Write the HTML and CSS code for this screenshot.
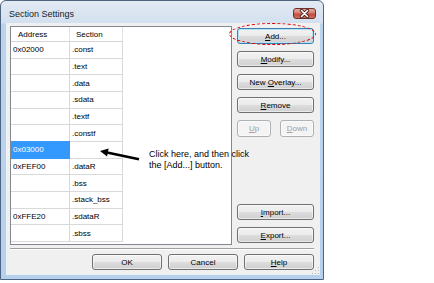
FILE: index.html
```html
<!doctype html>
<html lang="en">
  <head>
    <meta charset="UTF-8" />
    <title>Section Settings</title>
    <link rel="stylesheet" href="styles.css">
  </head>
  <body>
    <div class="window">
      <div class="titlebar">
        <span class="title">Section Settings</span>
        <span class="close">
          <svg width="21" height="9" viewBox="0 0 21 9">
            <path d="M7.5 1.5 L13.5 7.5 M13.5 1.5 L7.5 7.5" stroke="#4a2320" stroke-width="3.2" stroke-linecap="round" />
            <path d="M7.5 1.5 L13.5 7.5 M13.5 1.5 L7.5 7.5" stroke="#fff" stroke-width="1.6" stroke-linecap="round" />
          </svg>
        </span>
      </div>
      <div class="client">
        <div class="main">
          <div class="list">
            <div class="row head">
              <div class="cell addr">Address</div>
              <div class="cell sec">Section</div>
            </div>
            <div class="row"><div class="cell addr">0x02000</div><div class="cell sec">.const</div></div>
            <div class="row"><div class="cell addr"></div><div class="cell sec">.text</div></div>
            <div class="row"><div class="cell addr"></div><div class="cell sec">.data</div></div>
            <div class="row"><div class="cell addr"></div><div class="cell sec">.sdata</div></div>
            <div class="row"><div class="cell addr"></div><div class="cell sec">.textf</div></div>
            <div class="row"><div class="cell addr"></div><div class="cell sec">.constf</div></div>
            <div class="row"><div class="cell addr selected">0x03000</div><div class="cell sec"></div></div>
            <div class="row"><div class="cell addr">0xFEF00</div><div class="cell sec">.dataR</div></div>
            <div class="row"><div class="cell addr"></div><div class="cell sec">.bss</div></div>
            <div class="row"><div class="cell addr"></div><div class="cell sec">.stack_bss</div></div>
            <div class="row"><div class="cell addr">0xFFE20</div><div class="cell sec">.sdataR</div></div>
            <div class="row"><div class="cell addr"></div><div class="cell sec">.sbss</div></div>
          </div>
          <div class="side">
            <button class="btn default"><u>A</u>dd...</button>
            <button class="btn"><u>M</u>odify...</button>
            <button class="btn">New <u>O</u>verlay...</button>
            <button class="btn"><u>R</u>emove</button>
            <div class="pair">
              <button class="btn disabled"><u>U</u>p</button>
              <button class="btn disabled"><u>D</u>own</button>
            </div>
            <div class="spacer"></div>
            <button class="btn"><u>I</u>mport...</button>
            <button class="btn"><u>E</u>xport...</button>
          </div>
        </div>
        <div class="sep"></div>
        <div class="footer">
          <button class="btn wide">OK</button>
          <button class="btn wide">Cancel</button>
          <button class="btn wide"><u>H</u>elp</button>
        </div>
        <div class="grip"></div>
      </div>

      <!-- annotation drawn over the dialog -->
      <div class="ring"></div>
      <svg class="arrow" width="46" height="18" viewBox="0 0 46 18">
        <path d="M9 6.6 L41 13.2" stroke="#000" stroke-width="2.6" />
        <path d="M2 5 L10.6 2.6 L9.1 10.4 Z" fill="#000" />
      </svg>
      <div class="callout">Click here, and then click<br />the [Add...] button.</div>
    </div>
  </body>
</html>
```

FILE: styles.css
```css
html,
body {
  margin: 0;
  padding: 0;
  background: #fff;
}
body {
  font-family: "Liberation Sans", Arial, sans-serif;
  font-size: 8px;
  color: #000;
}
.window {
  position: relative;
  box-sizing: border-box;
  width: 324px;
  height: 280px;
  border: 1px solid #4d6380;
  border-radius: 6px 6px 0 0;
  background: linear-gradient(180deg, #e2eaf4 0px, #d3e0ef 22px, #bcd3ec 23px, #b6d1ee 100%);
  display: flex;
  flex-direction: column;
}
.titlebar {
  height: 22px;
  display: flex;
  align-items: flex-start;
  justify-content: space-between;
  padding: 0 7px 0 8px;
}
.title {
  font-size: 9px;
  color: #1b1b1b;
  margin-top: 8px;
}
.close {
  margin-top: 7px;
  width: 21px;
  height: 9px;
  border: 1px solid #6f2f2a;
  border-radius: 3px;
  background: linear-gradient(180deg, #e8aaa0 0%, #d37b6f 45%, #c24a3c 55%, #cf6f5a 100%);
  display: flex;
}
.client {
  position: relative;
  margin: 0 3px 4px 5px;
  height: 252px;
  box-sizing: border-box;
  background: #f0f0f0;
  padding: 3px 6px 5px 4px;
  display: flex;
  flex-direction: column;
}
.main {
  display: flex;
  height: 219px;
}
.list {
  box-sizing: border-box;
  width: 222px;
  height: 219px;
  border: 1px solid #828790;
  background: #fff;
}
.row {
  display: flex;
  height: 16.67px;
  box-sizing: border-box;
  width: 112px;
  border-bottom: 1px solid #d9d9d9;
}
.row.head {
  height: 15px;
  border-bottom: 1px solid #d5d5d5;
}
.cell {
  box-sizing: border-box;
  border-right: 1px solid #d9d9d9;
  padding-left: 2px;
  display: flex;
  align-items: center;
  white-space: nowrap;
}
.addr {
  width: 59px;
}
.sec {
  width: 53px;
}
.head .cell {
  border-right-color: #e3e3e3;
  padding-left: 6px;
}
.head .addr {
  padding-left: 7px;
}
.selected {
  background: #3399ff;
  color: #fff;
  margin-top: -1px;
  margin-bottom: -1px;
  border-right: none;
}
.side {
  width: 77px;
  margin-left: 5px;
  padding: 2px 0;
  box-sizing: border-box;
  display: flex;
  flex-direction: column;
  gap: 7px;
}
.spacer {
  flex: 1;
}
.pair {
  display: flex;
  justify-content: space-between;
}
.pair .btn {
  width: 34px;
  height: 17px;
}
.btn {
  box-sizing: border-box;
  height: 16px;
  padding: 0;
  font-family: inherit;
  font-size: 8px;
  color: #000;
  border: 1px solid #707070;
  border-radius: 3px;
  background: linear-gradient(180deg, #f2f2f2 0%, #ebebeb 50%, #dddddd 51%, #cfcfcf 100%);
  box-shadow: inset 0 0 0 1px rgba(255, 255, 255, 0.55);
}
.btn.default {
  border-color: #3c7fb1;
  box-shadow: inset 0 0 0 1px #b4e3f8;
  background: linear-gradient(180deg, #f2f2f2 0%, #ebebeb 50%, #dcdcdc 51%, #d2d2d2 100%);
}
.btn.disabled {
  color: #a0a0a0;
  border-color: #adb2b5;
  background: #f4f4f4;
}
.sep {
  margin-top: 3px;
  height: 1px;
  border-top: 1px solid #a0a0a0;
  border-bottom: 1px solid #fff;
  box-sizing: content-box;
  height: 0;
}
.footer {
  margin-top: 4px;
  display: flex;
  justify-content: flex-end;
  gap: 6px;
}
.btn.wide {
  width: 70px;
}
.grip {
  position: absolute;
  right: 1px;
  bottom: 1px;
  width: 8px;
  height: 8px;
  background: radial-gradient(circle, #b8b8b8 0.8px, transparent 1px) 0 0 / 3px 3px;
  clip-path: polygon(100% 0, 100% 100%, 0 100%);
}
.ring {
  position: absolute;
  left: 228px;
  top: 22px;
  width: 87px;
  height: 22px;
  box-sizing: border-box;
  border: 1px dashed #e00000;
  border-radius: 50%;
}
.arrow {
  position: absolute;
  left: 97px;
  top: 145px;
}
.callout {
  position: absolute;
  left: 148px;
  top: 148px;
  font-size: 9px;
  line-height: 11px;
  color: #000;
  white-space: nowrap;
}
```
